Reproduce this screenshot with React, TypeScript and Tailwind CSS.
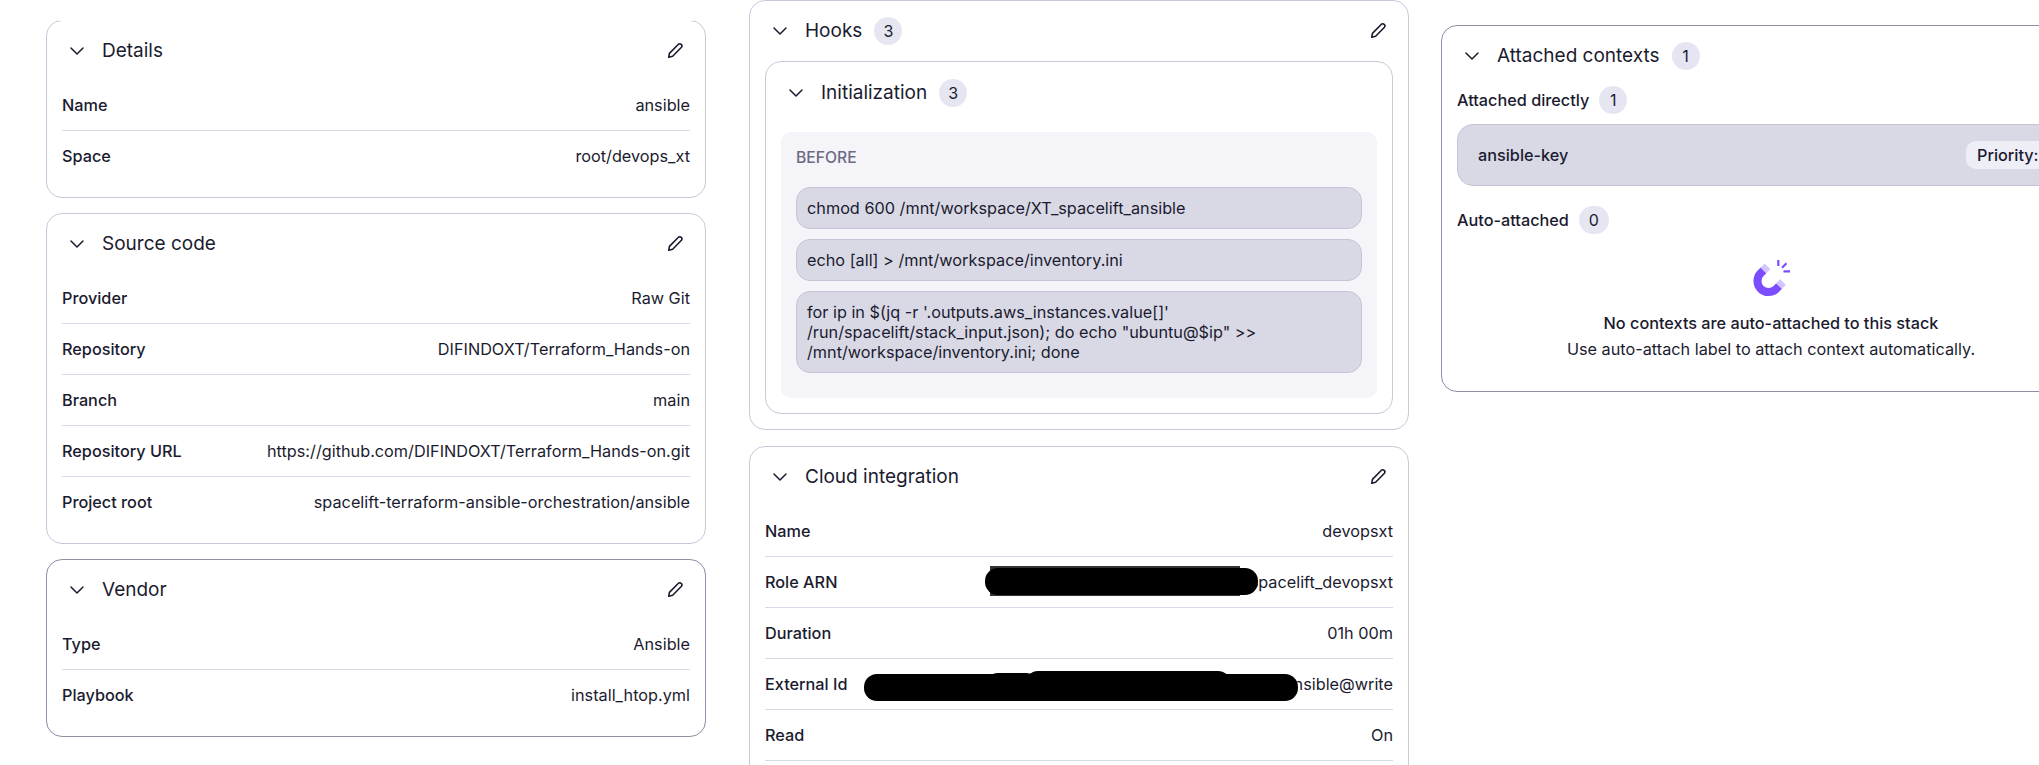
import React from "react";
import { ChevronDown } from "lucide-react";

const PencilIcon: React.FC = () => (
  <svg width="17" height="17" viewBox="0 0 16 16" fill="none" stroke="#1b1b2f" strokeWidth="1.5" strokeLinejoin="round">
    <path d="M1.6 14.4l.7-3.7 8.2-8.4a1.9 1.9 0 0 1 2.9 0 1.9 1.9 0 0 1 .2 2.6L5.3 13.4z" />
  </svg>
);

const MagnetIcon: React.FC = () => (
  <svg width="37" height="37" viewBox="0 0 37 37" fill="none">
    <path d="M10.5 10.4L7.7 13.2A11 11 0 0 0 23.3 28.8L26.1 26" stroke="#7c4dff" strokeWidth="8" />
    <path d="M14.5 6.4L10.5 10.4M30 22L26.1 26" stroke="#d4c4ff" strokeWidth="8" />
    <path d="M25.3 0V6M33.5 3.2L29 7.7M30.5 11.3H37" stroke="#7c4dff" strokeWidth="2.2" />
  </svg>
);

const Badge: React.FC<{ value: number; wide?: boolean }> = ({ value, wide }) => (
  <span
    className={`flex h-7 items-center justify-center rounded-full bg-[#e6e6f2] text-[16px] text-[#1b1b2f] ${
      wide ? "w-[30px]" : "w-[28px]"
    }`}
  >
    {value}
  </span>
);

const CardHeader: React.FC<{ title: string; count?: number; editable?: boolean; className?: string }> = ({
  title,
  count,
  editable = true,
  className = "mb-[15px]",
}) => (
  <div className={`flex h-7 items-center justify-between ${className}`}>
    <div className="flex items-center">
      <ChevronDown size={24} strokeWidth={1.5} className="ml-[3px] text-[#1b1b2f]" />
      <h3 className="ml-[13px] text-[19px] font-normal text-[#1b1b2f]">{title}</h3>
      {count !== undefined && (
        <span className="ml-3">
          <Badge value={count} />
        </span>
      )}
    </div>
    {editable && (
      <span className="mr-[6px] mb-[2px]">
        <PencilIcon />
      </span>
    )}
  </div>
);

const Row: React.FC<{ label: string; value: string; divider?: boolean; children?: React.ReactNode }> = ({
  label,
  value,
  divider = true,
  children,
}) => (
  <div className={`relative flex items-center justify-between py-[15px] ${divider ? "border-b border-[#d9d9e6]" : ""}`}>
    <span className="font-medium">{label}</span>
    <span>{value}</span>
    {children}
  </div>
);

const Card: React.FC<{ dark?: boolean; className?: string; children: React.ReactNode }> = ({
  dark,
  className = "pb-4",
  children,
}) => (
  <section
    className={`relative w-[660px] rounded-2xl border bg-white px-[15px] pt-4 ${
      dark ? "border-[#8e8ea6]" : "border-[#c9c9dc]"
    } ${className}`}
  >
    {children}
  </section>
);

const HookItem: React.FC<{ children: React.ReactNode }> = ({ children }) => (
  <div className="rounded-[14px] border border-[#c4c4d6] bg-[#d9d9e6] px-[10px] py-[10px]">{children}</div>
);

export default function App() {
  return (
    <div className="flex h-[765px] w-full overflow-hidden bg-white pl-[46px] font-['Inter',sans-serif] text-[16.25px] leading-[20px] text-[#1b1b2f]">
      <div className="flex shrink-0 flex-col gap-[15px] pt-5">
        <Card>
          {/* top edge is cut off in the screenshot */}
          <div className="absolute -top-px right-3 left-3 h-px bg-white" />
          <CardHeader title="Details" />
          <Row label="Name" value="ansible" />
          <Row label="Space" value="root/devops_xt" divider={false} />
        </Card>
        <Card>
          <CardHeader title="Source code" />
          <Row label="Provider" value="Raw Git" />
          <Row label="Repository" value="DIFINDOXT/Terraform_Hands-on" />
          <Row label="Branch" value="main" />
          <Row label="Repository URL" value="https://github.com/DIFINDOXT/Terraform_Hands-on.git" />
          <Row label="Project root" value="spacelift-terraform-ansible-orchestration/ansible" divider={false} />
        </Card>
        <Card dark>
          <CardHeader title="Vendor" />
          <Row label="Type" value="Ansible" />
          <Row label="Playbook" value="install_htop.yml" divider={false} />
        </Card>
      </div>

      <div className="ml-[43px] flex shrink-0 flex-col gap-4">
        <Card className="pb-[15px]">
          <CardHeader title="Hooks" count={3} className="mb-4" />
          <div className="rounded-2xl border border-[#c9c9dc] px-[15px] pt-[17px] pb-[15px]">
            <div className="mb-[25px] flex h-7 items-center">
              <ChevronDown size={24} strokeWidth={1.5} className="ml-[3px]" />
              <h4 className="ml-[13px] text-[19px] font-normal">Initialization</h4>
              <span className="ml-3">
                <Badge value={3} />
              </span>
            </div>
            <div className="rounded-[10px] bg-[#f4f4f9] px-[15px] pt-4 pb-[25px]">
              <div className="mb-[19px] text-[15.7px] font-medium text-[#6b6b85]">BEFORE</div>
              <div className="flex flex-col gap-[10px]">
                <HookItem>chmod 600 /mnt/workspace/XT_spacelift_ansible</HookItem>
                <HookItem>echo [all] &gt; /mnt/workspace/inventory.ini</HookItem>
                <HookItem>
                  for ip in $(jq -r '.outputs.aws_instances.value[]' /run/spacelift/stack_input.json); do echo
                  "ubuntu@$ip" &gt;&gt; /mnt/workspace/inventory.ini; done
                </HookItem>
              </div>
            </div>
          </div>
        </Card>
        <Card className="pb-16">
          <CardHeader title="Cloud integration" />
          <Row label="Name" value="devopsxt" />
          <Row label="Role ARN" value="spacelift_devopsxt">
            <span className="absolute top-[9px] left-[225px] h-[30px] w-[250px] bg-[#333]" />
            <span className="absolute top-[11px] left-[220px] h-[27px] w-[273px] rounded-[13px] bg-black" />
          </Row>
          <Row label="Duration" value="01h 00m" />
          <Row label="External Id" value="ansible@write">
            <span className="absolute top-[15px] left-[99px] h-[27px] w-[434px] rounded-[13px] bg-black" />
            <span className="absolute top-[14px] left-[220px] h-[27px] w-[54px] rounded-[13px] bg-black" />
            <span className="absolute top-[12px] left-[260px] h-[27px] w-[206px] rounded-[13px] bg-black" />
          </Row>
          <Row label="Read" value="On" />
        </Card>
      </div>

      <div className="ml-8 shrink-0 pt-[25px]">
        <Card dark className="pb-8">
          <div className="mb-4">
            <div className="flex h-7 items-center">
              <ChevronDown size={24} strokeWidth={1.5} className="ml-[3px]" />
              <h3 className="ml-[13px] text-[19px] font-normal">Attached contexts</h3>
              <span className="ml-3">
                <Badge value={1} />
              </span>
            </div>
          </div>
          <div className="mb-[10px] flex h-7 items-center gap-[10px]">
            <span className="font-medium">Attached directly</span>
            <Badge value={1} />
          </div>
          <div className="flex h-[62px] items-center justify-between rounded-2xl border border-[#c4c4d6] bg-[#d9d9e6] pr-[15px] pl-5">
            <span className="font-medium">ansible-key</span>
            <span className="flex h-7 w-[103px] items-center rounded-[10px] bg-[#eeeef6] pl-[11px] font-medium">
              Priority:
            </span>
          </div>
          <div className="mt-5 flex h-7 items-center gap-[10px]">
            <span className="font-medium">Auto-attached</span>
            <Badge value={0} wide />
          </div>
          <div className="mt-[26px] flex flex-col items-center">
            <MagnetIcon />
            <p className="mt-4 font-medium">No contexts are auto-attached to this stack</p>
            <p className="mt-[6px]">Use auto-attach label to attach context automatically.</p>
          </div>
        </Card>
      </div>
    </div>
  );
}
